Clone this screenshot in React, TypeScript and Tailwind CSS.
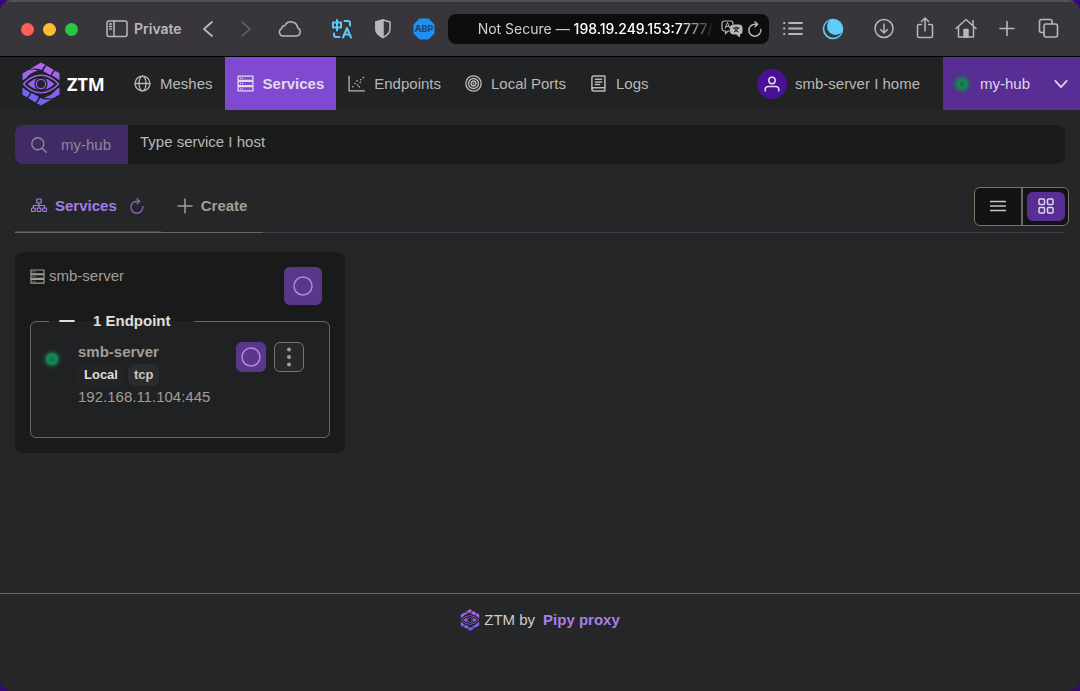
import type { ReactNode } from "react";

type IconProps = { className?: string };

function Icon({
  className = "size-4",
  box = 16,
  width = 1.2,
  children,
}: IconProps & { box?: number; width?: number; children: ReactNode }) {
  return (
    <svg
      className={`shrink-0 ${className}`}
      viewBox={`0 0 ${box} ${box}`}
      fill="none"
      stroke="currentColor"
      strokeWidth={width}
      strokeLinecap="round"
      strokeLinejoin="round"
      aria-hidden="true"
    >
      {children}
    </svg>
  );
}

function Logo({ className, id }: { className: string; id: string }) {
  const blades = (
    <>
      <path d="M8 7 19 .5l4.500 2.600Q20.500 5 20 8 14 5.500 8 7z" />
      <path d="M24.800 3.800 32 8Q29.500 10 28.500 13.500 24.500 10.500 21.300 9.500 22 6 24.800 3.800z" />
      <path d="M33.200 8.700 37.500 11.200v7.300Q34 15.500 30 13.800 31 10.500 33.200 8.700z" />
      <path d="M.5 11.500 6.500 8Q11 6.800 16 8.500 8 10.500 3.800 16.500L.5 18.500z" />
    </>
  );
  return (
    <svg className={`shrink-0 ${className}`} viewBox="0 0 38 44" fill="none" aria-hidden="true">
      <defs>
        <linearGradient id={`${id}-top`} x1="22" y1="0" x2="18" y2="22" gradientUnits="userSpaceOnUse">
          <stop stopColor="#b565ef" />
          <stop offset="1" stopColor="#9563ee" />
        </linearGradient>
        {/* painted on the rotated half, so it runs from the lower tip upwards */}
        <linearGradient id={`${id}-bottom`} x1="22" y1="0" x2="14" y2="22" gradientUnits="userSpaceOnUse">
          <stop stopColor="#6467f5" />
          <stop offset="1" stopColor="#8f62ee" />
        </linearGradient>
      </defs>
      <g fill={`url(#${id}-top)`}>{blades}</g>
      <g fill={`url(#${id}-bottom)`} transform="rotate(180 19 22)">
        {blades}
      </g>
      <path
        d="M1 22Q9 12.500 19 12.500T37 22Q29 31.500 19 31.500T1 22z"
        fill="#212224"
        stroke="#212224"
        strokeWidth="3.500"
      />
      <path d="M1.500 22Q9.500 13.200 19 13.200T36.500 22Q28.500 30.800 19 30.800T1.500 22z" stroke="#9763ee" strokeWidth="1.500" />
      <path d="M5.500 22Q12 16 19 16t13.500 6Q26 28 19 28T5.500 22z" fill="#9263ee" />
      <circle cx="19" cy="22" r="6.600" fill="#212224" />
      <circle cx="19" cy="22" r="5.200" fill="#9263ee" />
      <circle cx="19" cy="22" r="4" fill="#212224" />
    </svg>
  );
}

const GlobeIcon = () => (
  <Icon className="size-[17px]">
    <circle cx="8" cy="8" r="7" />
    <ellipse cx="8" cy="8" rx="3.300" ry="7" />
    <path d="M1 8h14" />
  </Icon>
);

const ServerIcon = ({ className = "size-[17px]" }: IconProps) => (
  <Icon className={className}>
    <path d="M1 1h14v4H1zM1 6h14v4H1zM1 11h14v4H1z" />
    <path d="M3.200 3h.1M5.200 3h.1M3.200 8h.1M5.200 8h.1M3.200 13h.1M5.200 13h.1" />
  </Icon>
);

const ScatterIcon = () => (
  <Icon className="size-[17px]">
    <path d="M1 1v14h14.500" />
    <path
      d="M4.500 11h.1M6.500 8h.1M9 9.500h.1M8.500 5.500h.1M11.500 7h.1M12 4.500h.1M14.500 2.500h.1M10.500 11h.1"
      strokeWidth="1.500"
    />
  </Icon>
);

const TargetIcon = () => (
  <Icon className="size-[17px]" width={1.3}>
    <circle cx="8" cy="8" r="7.200" />
    <circle cx="8" cy="8" r="4.700" />
    <circle cx="8" cy="8" r="2.300" />
    <circle cx="8" cy="8" r=".3" />
  </Icon>
);

const BookIcon = () => (
  <Icon className="size-[17px]" width={1.4}>
    <path d="M14 12V1H3.500Q1.800 1 1.800 2.700v10.500Q1.800 15 3.500 15H14M14 12H3.500Q1.800 12 1.800 13.400M14 12v3" />
    <path d="M5 4h6M5 6.500h6M5 9h4" />
  </Icon>
);

const RefreshIcon = ({ className }: IconProps) => (
  <Icon className={className} width={1.4}>
    <path d="M13.800 8.500A6 6 0 1 1 8 3.200h2" />
    <path d="M8 .8l2.600 2.400L8 5.700" />
  </Icon>
);

const SitemapIcon = () => (
  <Icon>
    <rect x="5.800" y="1" width="4.400" height="4" rx=".6" />
    <rect x=".6" y="10" width="3.600" height="3.500" rx=".8" />
    <rect x="6.200" y="10" width="3.600" height="3.500" rx=".8" />
    <rect x="11.800" y="10" width="3.600" height="3.500" rx=".8" />
    <path d="M8 5v5M2.400 10V7.500h11.200V10" />
  </Icon>
);

const PlusIcon = ({ className }: IconProps) => (
  <Icon className={className} width={1.5}>
    <path d="M8 1v14M1 8h14" />
  </Icon>
);

const CircleIcon = () => (
  <Icon className="size-5" box={20} width={1.5}>
    <circle cx="10" cy="10" r="9" />
  </Icon>
);

function StatusDot() {
  return (
    <span className="flex size-3 shrink-0 items-center justify-center rounded-full bg-[#178455] shadow-[0_0_4px_1px_#178455]">
      <span className="size-1 rounded-full border border-[#0f6b42]" />
    </span>
  );
}

function BrowserBar() {
  return (
    <div className="flex h-[57px] items-center border-t-2 border-b border-t-[#535157] border-b-black bg-[#39363b] pr-5 pl-[21px] font-[Inter,sans-serif] text-[#bab7bb]">
      <div className="flex gap-[9px]">
        <span className="size-[13px] rounded-full bg-[#ff5f57]" />
        <span className="size-[13px] rounded-full bg-[#febc2e]" />
        <span className="size-[13px] rounded-full bg-[#28c840]" />
      </div>
      <button className="ml-7 flex items-center gap-1.5 text-sm font-semibold" aria-label="Private">
        <Icon className="size-[22px]" box={22} width={1.5}>
          <rect x="1" y="3" width="20" height="15.500" rx="2" />
          <path d="M8 3v15.500M3.500 6h2M3.500 8.500h2M3.500 11h2" />
        </Icon>
        Private
      </button>
      <button className="ml-[14px]" aria-label="Back">
        <Icon className="size-6" box={24} width={1.8}>
          <path d="M16 5 8 12l8 7" />
        </Icon>
      </button>
      <button className="ml-[14px] text-[#656267]" aria-label="Forward" disabled>
        <Icon className="size-6" box={24} width={1.6}>
          <path d="m8 5 8 7-8 7" />
        </Icon>
      </button>
      <button className="ml-5" aria-label="Cloud tabs">
        <Icon className="size-6" box={24} width={1.5}>
          <path d="M6 19H18a4.300 4.300 0 0 0 1.700-8.200A6.800 6.800 0 0 0 6.800 8.800 3.200 3.200 0 0 0 3.600 11.500 4 4 0 0 0 6 19z" />
        </Icon>
      </button>
      <button className="ml-7 text-[#5cc8fa]" aria-label="Translate">
        <Icon className="size-6" box={24} width={2}>
          <path d="M3 5.500h8v5H3zM7 3v10.500M14.500 4H18q2 0 2 2v2.500M4 16.500V18Q4 20 6 20h3.500" />
          <path d="m13 20.500 4-9.500 4 9.500M14.500 17.500h5" />
        </Icon>
      </button>
      <button className="ml-[17px]" aria-label="Privacy report">
        <Icon className="size-6" box={24} width={1.5}>
          <path d="M12 3 19 5v7q0 5-7 8.500Q5 17 5 12V5z" />
          <path d="M12 3 5 5v7q0 5 7 8.500z" fill="currentColor" />
        </Icon>
      </button>
      <button className="ml-[17px]" aria-label="Ad blocker">
        <svg className="size-6" viewBox="0 0 24 24" aria-hidden="true">
          <path d="M7.500 1.500h9l6 6v9l-6 6h-9l-6-6v-9z" fill="#1b90f2" />
          <text x="12" y="15" textAnchor="middle" fontSize="9" fontWeight="700" fontFamily="Inter, sans-serif" fill="#263f63">
            ABP
          </text>
        </svg>
      </button>
      <div className="ml-3 flex h-[30px] min-w-0 flex-1 items-center rounded-lg bg-[#0d0d0e] pr-1.5 pl-[30px] text-sm">
        <span className="min-w-0 flex-1 whitespace-nowrap text-[#d0d0d0] mask-r-from-85% mask-r-to-100%">
          Not Secure — <span className="font-medium text-white">198.19.249.153:7777/</span>
        </span>
        <button className="ml-1.5" aria-label="Translate page">
          <svg className="h-[18px] w-[22px]" viewBox="0 0 22 18" fill="none" stroke="currentColor" aria-hidden="true">
            <path d="M9 11H7l-2.500 2.500V11H3.500Q1 11 1 8.500v-5Q1 1 3.500 1h6Q12 1 12 3.500V4" strokeWidth="1.200" />
            <path d="m4 8.500 2.500-6 2.500 6M5 6.500h3" />
            <path d="M12 5h6.500Q21 5 21 7.500v4q0 2.500-2.500 2.500v3L15.500 14H12q-2.500 0-2.500-2.500v-4Q9.500 5 12 5z" fill="currentColor" />
            <path d="M12 8h6.500M15.200 6.500V8M13 12q3.500-1.500 4-4M13.500 8.500q1 2.500 4 3.500" stroke="#0d0d0e" />
          </svg>
        </button>
        <button className="ml-1" aria-label="Reload">
          <RefreshIcon className="size-4" />
        </button>
      </div>
      <button className="ml-3" aria-label="Reading list">
        <Icon className="size-6" box={24} width={1.8}>
          <path d="M8 6h13M8 11.500h13M8 17h13M3 6h.5M3 11.500h.5M3 17h.5" />
        </Icon>
      </button>
      <button className="ml-4" aria-label="Dark mode">
        <svg className="size-6" viewBox="0 0 24 24" aria-hidden="true">
          <circle cx="12" cy="12" r="10.300" fill="#5fcdfb" />
          <path d="M8.500 3.500A9 9 0 1 0 20.500 15.500 8 8 0 0 1 8.500 3.500z" fill="#39363b" />
        </svg>
      </button>
      <div className="ml-[27px] flex gap-[17px]">
        <button aria-label="Downloads">
          <Icon className="size-6" box={24} width={1.5}>
            <circle cx="12" cy="11.500" r="9" />
            <path d="M12 7v9M8.500 12.500 12 16l3.500-3.500" />
          </Icon>
        </button>
        <button aria-label="Share">
          <Icon className="size-6" box={24} width={1.5}>
            <path d="M8.500 7.500H6Q4.500 7.500 4.500 9v10q0 1.500 1.500 1.500h12q1.500 0 1.500-1.500V9q0-1.500-1.500-1.500h-2.500M12 14V1.500M8.500 4.500 12 1l3.500 3.500" />
          </Icon>
        </button>
        <button aria-label="Home">
          <Icon className="size-6" box={24} width={1.5}>
            <path d="M2 11.500 12 2.500l10 9M4.500 9.500V20h15V9.500M19 8.500v-5" />
            <path d="M10 12.500h4V20h-4z" fill="currentColor" />
          </Icon>
        </button>
        <button aria-label="New tab">
          <Icon className="size-6" box={24} width={1.6}>
            <path d="M12 4.500v14M5 11.500h14" />
          </Icon>
        </button>
        <button aria-label="Tab overview">
          <Icon className="size-6" box={24} width={1.6}>
            <rect x="8" y="7" width="13.500" height="13" rx="2" />
            <path d="M8 15.500H5.500q-2 0-2-2v-9q0-2 2-2H14q2 0 2 2V7" />
          </Icon>
        </button>
      </div>
    </div>
  );
}

function NavItem({ icon, label, active = false }: { icon: ReactNode; label: string; active?: boolean }) {
  return (
    <a
      href="#"
      className={`flex items-center gap-[9px] px-3 whitespace-nowrap ${
        active ? "bg-[#7f49d2] font-bold text-[#e2dcea]" : "text-[#bbb8b3]"
      }`}
    >
      {icon}
      {label}
    </a>
  );
}

function NavBar() {
  return (
    <header className="flex h-[53px] bg-[#212224]">
      <a
        href="#"
        className="flex w-[122px] items-center gap-[7px] pl-[22px] font-['Noto_Sans',sans-serif] text-lg font-bold text-white"
      >
        <Logo className="h-11 w-[38px]" id="logo-nav" />
        ZTM
      </a>
      <nav className="flex">
        <NavItem icon={<GlobeIcon />} label="Meshes" />
        <NavItem icon={<ServerIcon />} label="Services" active />
        <NavItem icon={<ScatterIcon />} label="Endpoints" />
        <NavItem icon={<TargetIcon />} label="Local Ports" />
        <NavItem icon={<BookIcon />} label="Logs" />
      </nav>
      <button className="mr-[23px] ml-auto flex items-center gap-2 whitespace-nowrap text-[#bbb8b3]">
        <span className="flex size-[30px] items-center justify-center rounded-full bg-[#491296] text-[#e0d8ea]">
          <Icon width={1.5}>
            <circle cx="8" cy="4.500" r="3.200" />
            <path d="M1.200 15v-1.500q0-3 3.300-3h7q3.300 0 3.300 3V15" />
          </Icon>
        </span>
        smb-server I home
      </button>
      <button className="flex w-[137px] items-center bg-[#582d94] pr-3 pl-[13px] text-[#ddd6e6]">
        <StatusDot />
        <span className="ml-3">my-hub</span>
        <Icon className="ml-auto size-[14px]" width={2}>
          <path d="m1.500 4.500 6.500 7 6.500-7" />
        </Icon>
      </button>
    </header>
  );
}

function ServiceCard() {
  return (
    <section className="w-[330px] rounded-lg bg-[#191b1a] p-[15px] text-[#a39e95]">
      <div className="flex items-start justify-between pr-2">
        <h2 className="flex items-center gap-1 leading-[18px]">
          <ServerIcon className="size-[15px]" />
          smb-server
        </h2>
        <button
          className="flex size-[38px] items-center justify-center rounded-md bg-[#5a3889] text-[#b184f0]"
          aria-label="Open smb-server"
        >
          <CircleIcon />
        </button>
      </div>
      <fieldset className="mt-[7px] rounded-md border border-[#6c665c] bg-[#202123] pb-[29px]">
        <legend className="ml-[18px] h-[18px] leading-[18px]">
          <button className="flex h-[18px] w-[145px] items-center gap-[18px] pl-[10px] font-bold text-[#e0ded9]">
            <Icon width={1.8}>
              <path d="M1 8h14" />
            </Icon>
            1 Endpoint
          </button>
        </legend>
        <div className="flex items-start pt-3 pr-[25px] pl-[15px]">
          <span className="mt-[11px]">
            <StatusDot />
          </span>
          <div className="ml-5">
            <div className="leading-5 font-bold">smb-server</div>
            <div className="mt-0.5 flex gap-1 text-[13px] font-bold">
              <span className="rounded-md bg-[#232426] px-1.5 leading-[22px] text-[#e0ded9]">Local</span>
              <span className="rounded-md bg-[#2a2b2d] px-1.5 leading-[22px] text-[#c9c6c0]">tcp</span>
            </div>
            <div>192.168.11.104:445</div>
          </div>
          <div className="ml-auto flex gap-2">
            <button
              className="flex size-[30px] items-center justify-center rounded-md bg-[#5a3889] text-[#b184f0]"
              aria-label="Open endpoint"
            >
              <CircleIcon />
            </button>
            <button
              className="flex size-[30px] items-center justify-center rounded-md border border-[#7a7469] bg-[#27282a]"
              aria-label="More"
            >
              <svg className="size-5" viewBox="0 0 20 20" fill="currentColor" aria-hidden="true">
                <circle cx="10" cy="2.500" r="2" />
                <circle cx="10" cy="10" r="2" />
                <circle cx="10" cy="17.500" r="2" />
              </svg>
            </button>
          </div>
        </div>
      </fieldset>
    </section>
  );
}

export default function App() {
  return (
    <div className="min-h-screen bg-[#32087a]">
      <div className="flex min-h-screen flex-col overflow-hidden rounded-xl bg-[#252628] font-['Liberation_Sans',Arial,sans-serif] text-[15px] leading-[22px]">
        <BrowserBar />
        <NavBar />
        <main className="flex-1 p-[15px]">
          <div className="flex h-[39px] overflow-hidden rounded-lg bg-[#191b1a]">
            <label htmlFor="search" className="flex w-[113px] items-center gap-[14px] bg-[#402b66] pl-4 text-[#8e8798]">
              <Icon className="size-4" width={1.4}>
                <circle cx="6.800" cy="6.800" r="6" />
                <path d="m11.200 11.200 4 4" />
              </Icon>
              my-hub
            </label>
            <input
              id="search"
              type="text"
              placeholder="Type service I host"
              className="h-8 min-w-0 flex-1 bg-transparent px-3 text-[#bbb8b3] outline-none placeholder:text-[#bbb8b3]"
            />
          </div>

          <div className="mt-4 flex justify-between border-b border-[#3d4147]">
            <div className="-mb-px flex border-b border-[#6c665c] font-bold">
              <button className="flex h-[52px] items-center gap-2 border-b border-[#582d94] px-4 text-[#a57be8]">
                <SitemapIcon />
                Services
                <RefreshIcon className="ml-1 size-4 text-[#8460ba]" />
              </button>
              <button className="flex h-[52px] items-center gap-2 px-4 text-[#a39e95]">
                <PlusIcon className="size-4" />
                Create
              </button>
            </div>
            <div className="-mr-1 flex h-[39px] self-center rounded-md border border-[#7a7469] bg-[#131313] text-[#c9c6c0]">
              <button className="flex w-[46px] items-center justify-center" aria-label="List view">
                <Icon width={1.4}>
                  <path d="M.6 3.500h14.800M.6 8h14.800M.6 12.500h14.800" />
                </Icon>
              </button>
              <span className="flex border-l-2 border-[#6c665c] p-1 pr-[3px]">
                <button
                  className="flex w-[38px] items-center justify-center rounded-md bg-[#582d94] text-[#ddd6e6]"
                  aria-label="Grid view"
                >
                  <Icon width={1.5}>
                    <rect x="1" y="1" width="5.500" height="5.500" rx="1" />
                    <rect x="9.500" y="1" width="5.500" height="5.500" rx="1" />
                    <rect x="1" y="9.500" width="5.500" height="5.500" rx="1" />
                    <rect x="9.500" y="9.500" width="5.500" height="5.500" rx="1" />
                  </Icon>
                </button>
              </span>
            </div>
          </div>

          <div className="mt-[19px] flex flex-wrap gap-4">
            <ServiceCard />
          </div>
        </main>
        <footer className="flex h-[98px] items-start justify-center border-t border-[#6c665c] pt-[15px] text-[#d0cdc8]">
          <Logo className="h-[22px] w-5" id="logo-footer" />
          <span className="ml-1">ZTM by</span>
          <a href="#" className="ml-2 font-bold text-[#a97ee8]">
            Pipy proxy
          </a>
        </footer>
      </div>
    </div>
  );
}
